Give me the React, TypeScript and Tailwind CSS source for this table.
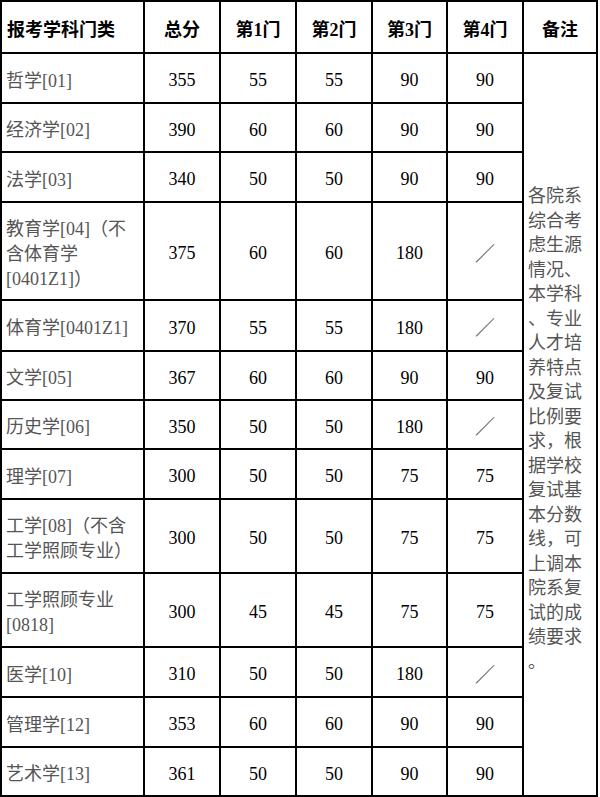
import React from "react";

type Row = { name: React.ReactNode; total: string; a: string; b: string; c: string; d: string };

const rows: Row[] = [
  { name: "哲学[01]", total: "355", a: "55", b: "55", c: "90", d: "90" },
  { name: "经济学[02]", total: "390", a: "60", b: "60", c: "90", d: "90" },
  { name: "法学[03]", total: "340", a: "50", b: "50", c: "90", d: "90" },
  {
    name: (
      <>
        教育学[04]（不
        <br />
        含体育学
        <br />
        [0401Z1]）
      </>
    ),
    total: "375",
    a: "60",
    b: "60",
    c: "180",
    d: "／",
  },
  { name: "体育学[0401Z1]", total: "370", a: "55", b: "55", c: "180", d: "／" },
  { name: "文学[05]", total: "367", a: "60", b: "60", c: "90", d: "90" },
  { name: "历史学[06]", total: "350", a: "50", b: "50", c: "180", d: "／" },
  { name: "理学[07]", total: "300", a: "50", b: "50", c: "75", d: "75" },
  {
    name: (
      <>
        工学[08]（不含
        <br />
        工学照顾专业）
      </>
    ),
    total: "300",
    a: "50",
    b: "50",
    c: "75",
    d: "75",
  },
  {
    name: (
      <>
        工学照顾专业
        <br />
        [0818]
      </>
    ),
    total: "300",
    a: "45",
    b: "45",
    c: "75",
    d: "75",
  },
  { name: "医学[10]", total: "310", a: "50", b: "50", c: "180", d: "／" },
  { name: "管理学[12]", total: "353", a: "60", b: "60", c: "90", d: "90" },
  { name: "艺术学[13]", total: "361", a: "50", b: "50", c: "90", d: "90" },
];

const remarkLines = [
  "各院系",
  "综合考",
  "虑生源",
  "情况、",
  "本学科",
  "、专业",
  "人才培",
  "养特点",
  "及复试",
  "比例要",
  "求，根",
  "据学校",
  "复试基",
  "本分数",
  "线，可",
  "上调本",
  "院系复",
  "试的成",
  "绩要求",
  "。",
];

const headers = ["报考学科门类", "总分", "第1门", "第2门", "第3门", "第4门", "备注"];

function NumCell({ v }: { v: string }) {
  if (v === "／") {
    return (
      <div className="bg-white flex items-center justify-center pt-[5px] text-[20px] text-[#555]">
        ／
      </div>
    );
  }
  return (
    <div className="bg-white flex items-center justify-center pt-[5px] text-[18px] text-black">{v}</div>
  );
}

export default function App() {
  return (
    <div
      className="w-[600px] h-[797px] bg-white"
      style={{ fontFamily: '"Liberation Serif", "Noto Sans CJK SC", serif' }}
    >
      <div className="grid w-[598px] bg-black p-[2px] gap-[2px] grid-cols-[141px_74px_74px_74px_73px_74px_72px] grid-rows-[50px_48px_47px_48px_96px_49px_47px_47px_48px_72px_72px_48px_48px_47px]">
        {headers.map((h, i) => (
          <div
            key={h}
            className={
              "bg-white flex items-center pt-[6px] font-bold text-[18px] text-black " +
              (i === 0 ? "justify-start pl-[5px]" : "justify-center")
            }
          >
            {h}
          </div>
        ))}
        {rows.map((r, idx) => (
          <React.Fragment key={idx}>
            <div className="bg-white flex items-center pl-[4px] pt-[6px] text-[18px] leading-[25px] text-[#555]">
              <div>{r.name}</div>
            </div>
            <NumCell v={r.total} />
            <NumCell v={r.a} />
            <NumCell v={r.b} />
            <NumCell v={r.c} />
            <NumCell v={r.d} />
            {idx === 0 && (
              <div className="bg-white row-span-13 flex items-center pl-[4px] pt-[9px] text-[18px] leading-[24.5px] text-[#555]">
                <div>
                  {remarkLines.map((l, i) => (
                    <div key={i} className="whitespace-nowrap">
                      {l}
                    </div>
                  ))}
                </div>
              </div>
            )}
          </React.Fragment>
        ))}
      </div>
    </div>
  );
}
